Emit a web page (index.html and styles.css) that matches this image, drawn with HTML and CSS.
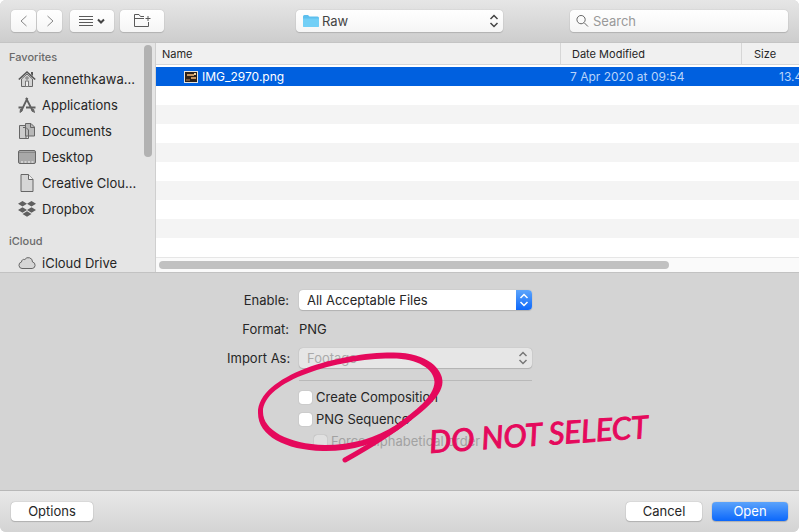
FILE: index.html
```html
<!DOCTYPE html>
<html lang="en">
<head>
    <meta charset="UTF-8">
    <meta name="viewport" content="width=device-width, initial-scale=1.0">
    <title>Import File</title>
    <link rel="stylesheet" href="styles.css">
</head>
<body>
    <div class="dialog">
        <header class="toolbar">
            <div class="tools">
                <div class="nav">
                    <button class="tool" aria-label="Back">
                        <svg width="10" height="14" viewBox="0 0 10 14"><path d="M7.500 2L2 7l5.500 5" class="thin"/></svg>
                    </button>
                    <button class="tool" aria-label="Forward">
                        <svg width="10" height="14" viewBox="0 0 10 14"><path d="M2.500 2L8 7l-5.500 5" class="thin"/></svg>
                    </button>
                </div>
                <button class="tool wide" aria-label="View">
                    <svg width="28" height="14" viewBox="0 0 28 14"><path d="M1 2.500h14M1 5.500h14M1 8.500h14M1 11.500h14" class="line"/><path d="M20 5.500l3 3 3-3" class="bold"/></svg>
                </button>
                <button class="tool wide" aria-label="New Folder">
                    <svg width="18" height="14" viewBox="0 0 18 14"><path d="M11 2.500H7.500L6 .5H1.500v12h14V8M1.500 4.500H11M15 2v5M12.500 4.500h5" class="line"/></svg>
                </button>
            </div>
            <div class="location">
                <svg class="folder" width="16" height="14" viewBox="0 0 16 14"><path d="M0 2.500Q0 1 1.500 1h3.500l1.500 1.500h8q1.500 0 1.500 1.500v7.500q0 1.500-1.500 1.500h-13Q0 13 0 11.500z" fill="#5dbfee"/><path d="M0 4.500h16v7q0 1.500-1.500 1.500h-13Q0 13 0 11.500z" fill="#72cff6"/></svg>
                <select aria-label="Location"><option>Raw</option></select>
                <svg class="arrows" width="10" height="14" viewBox="0 0 10 14"><path d="M1.500 5L5 1.500 8.500 5M1.500 9L5 12.500 8.500 9"/></svg>
            </div>
            <div class="search">
                <svg width="14" height="14" viewBox="0 0 14 14"><circle cx="5.500" cy="5.500" r="4.500" class="line"/><path d="M9 9l4 4" class="line"/></svg>
                <input type="text" placeholder="Search" aria-label="Search">
            </div>
        </header>

        <div class="browser">
            <nav class="sidebar">
                <h2>Favorites</h2>
                <ul>
                    <li><a href="#"><svg width="18" height="18" viewBox="0 0 18 18"><path d="M3.500 9v7.500h11V9L9 4z" fill="#d4d4d4" stroke="#666"/><path d="M.8 9.500L9 2l8.200 7.500" fill="none" stroke="#555" stroke-width="1.600"/><path d="M13 2h2v4l-2-1.800z" fill="#555"/><path d="M8 7h2v2H8zM7.500 11h3v5.500h-3z" fill="#eee" stroke="#777"/></svg>kennethkawa...</a></li>
                    <li><a href="#"><svg width="18" height="18" viewBox="0 0 18 18"><path d="M9.500 2L3 15.500M8 2l7 13.500M.5 11.500h5M8 11.500h9.500" fill="none" stroke="#606060" stroke-width="1.800"/><path d="M2.500 13L2 16.500 4.500 14.500M15.500 13l1 3.500-3-2" fill="#666" stroke="#666"/></svg>Applications</a></li>
                    <li><a href="#"><svg width="18" height="18" viewBox="0 0 18 18"><path d="M1.500 3.500H8v13H1.500z" fill="#ccc" stroke="#666"/><path d="M7.500 1.500H13L16.500 5v9h-9z" fill="#b8b8b8" stroke="#666"/><path d="M12.500 1.500v4h4M5 5.500h3l2.500 2.500v8.500H5" fill="none" stroke="#666"/></svg>Documents</a></li>
                    <li><a href="#"><svg width="18" height="18" viewBox="0 0 18 18"><rect x=".5" y="2.500" width="17" height="13" rx="1.500" fill="#a8a8a8" stroke="#666"/><path d="M1 4.500h16" stroke="#888"/><path d="M3 14h2M6.500 14h2M10 14h2M13.500 14h2" stroke="#ddd" stroke-width="1.500"/></svg>Desktop</a></li>
                    <li><a href="#"><svg width="18" height="18" viewBox="0 0 18 18"><path d="M3 .5h7.500L15 5.500v12H3z" fill="#d6d6d6" stroke="#666"/><path d="M10.500.5v5H15" fill="#f2f2f2" stroke="#666"/></svg>Creative Clou...</a></li>
                    <li><a href="#"><svg width="18" height="18" viewBox="0 0 18 18"><path d="M4.500 1L9 3.800 4.500 6.600 0 3.800zM13.500 1L18 3.800l-4.500 2.800L9 3.800zM4.500 7.200L9 10l-4.500 2.800L0 10zM13.500 7.200L18 10l-4.500 2.800L9 10zM9 11.200l4.500 2.800L9 16.800 4.500 14z" fill="#5f5f5f"/></svg>Dropbox</a></li>
                </ul>
                <h2>iCloud</h2>
                <ul>
                    <li><a href="#"><svg width="18" height="18" viewBox="0 0 18 18"><path d="M4 14.500a3.300 3.300 0 0 1-.5-6.500 2.500 2.500 0 0 1 3.300-2.500 4.200 4.200 0 0 1 7.700 2.500 3.300 3.300 0 0 1-.3 6.500z" fill="#d6d6d6" stroke="#666"/></svg>iCloud Drive</a></li>
                </ul>
                <div class="thumb"></div>
            </nav>

            <main class="files">
                <table>
                    <thead>
                        <tr><th class="name">Name</th><th class="date">Date Modified</th><th class="size">Size</th></tr>
                    </thead>
                    <tbody>
                        <tr class="selected">
                            <td class="name"><svg width="14" height="12" viewBox="0 0 14 12"><path d="M0 0h14v12H0z" fill="#e8e4dc"/><path d="M1 1h12v10H1z" fill="#2c2119"/><path d="M3 3h7v2H3zM7 6h5v2H7z" fill="#c69560"/><path d="M2 8h4v2H2z" fill="#76563a"/><path d="M10 2h2v2h-2z" fill="#efd3a1"/></svg>IMG_2970.png</td>
                            <td class="date">7 Apr 2020 at 09:54</td>
                            <td class="size">13.4 MB</td>
                        </tr>
                        <tr><td colspan="3"></td></tr>
                        <tr><td colspan="3"></td></tr>
                        <tr><td colspan="3"></td></tr>
                        <tr><td colspan="3"></td></tr>
                        <tr><td colspan="3"></td></tr>
                        <tr><td colspan="3"></td></tr>
                        <tr><td colspan="3"></td></tr>
                        <tr><td colspan="3"></td></tr>
                        <tr><td colspan="3"></td></tr>
                    </tbody>
                </table>
                <div class="scrollbar"><div class="bar"></div></div>
            </main>
        </div>

        <section class="import">
            <form class="options">
                <label for="enable">Enable:</label>
                <div class="select">
                    <select id="enable"><option>All Acceptable Files</option></select>
                    <svg class="arrows blue" width="16" height="20" viewBox="-3 -3 16 20"><path d="M1.500 5L5 1.500 8.500 5M1.500 9L5 12.500 8.500 9"/></svg>
                </div>
                <span class="label">Format:</span>
                <span>PNG</span>
                <label for="importAs">Import As:</label>
                <div class="select">
                    <select id="importAs" disabled><option>Footage</option></select>
                    <svg class="arrows" width="10" height="14" viewBox="0 0 10 14"><path d="M1.500 5L5 1.500 8.500 5M1.500 9L5 12.500 8.500 9"/></svg>
                </div>
                <div class="checks">
                    <label><input type="checkbox">Create Composition</label>
                    <label><input type="checkbox">PNG Sequence</label>
                    <label class="sub"><input type="checkbox" disabled>Force alphabetical order</label>
                </div>

                <!-- hand-drawn note over the checkboxes -->
                <svg class="note" width="420" height="125" viewBox="250 345 420 125">
                    <path class="ring" d="M392 352.500C428 352 443 370 442.500 382C442 398 420 414 398 430C378 444 350 451.500 323 451C285 450 258 436 258 413C258 375 340 352.500 392 352.500ZM392 358.500C340 358 263 380 263 412C263 430 288 444 325 445C352 445 376 438 396 425C415 411 434 397 434.500 382C434 369 418 358.500 392 358.500Z"/>
                    <path class="tail" d="M410 418C391 433 370 446 345 460"/>
                    <text x="430" y="453" transform="rotate(-4 430 453)">DO NOT SELECT</text>
                </svg>
            </form>
        </section>

        <footer class="actions">
            <button class="button options-button">Options</button>
            <button class="button">Cancel</button>
            <button class="button primary">Open</button>
        </footer>
    </div>
</body>
</html>
```
FILE: styles.css
```css
* {
    box-sizing: border-box;
}

body {
    margin: 0;
    background-color: #fff;
    color: #262626;
    font-family: Inter, "Liberation Sans", sans-serif;
    font-size: 13px;
    line-height: 20px;
}

button, input, select {
    font: inherit;
    color: inherit;
}

.dialog {
    display: flex;
    flex-direction: column;
    min-height: 100vh;
    overflow: hidden;
    background-color: #d4d4d4;
    border-radius: 6px;
}

/* toolbar */
.toolbar {
    display: grid;
    grid-template-columns: 1fr 207px 1fr;
    align-items: center;
    height: 43px;
    padding: 0 11px;
    background: linear-gradient(#e6e6e6, #cdcdcd);
    border-bottom: 1px solid #c4c4c4;
}

.tools {
    display: flex;
    gap: 6px;
}

.nav {
    display: flex;
    gap: 1px;
    margin-right: 2px;
}

.tool {
    display: flex;
    align-items: center;
    justify-content: center;
    width: 25px;
    height: 22px;
    padding: 0;
    border: 0;
    border-radius: 4px;
    background: linear-gradient(#fff, #f5f5f5);
    box-shadow: 0 0 1px #999, 0 1px 1px #b4b4b4;
}

.tool.wide {
    width: 44px;
}

.thin, .line, .bold {
    fill: none;
    stroke: #5a5a5a;
}

.thin {
    stroke: #888;
}

.bold {
    stroke: #444;
    stroke-width: 2;
}

.location, .search {
    position: relative;
    height: 22px;
    border-radius: 4px;
    background: linear-gradient(#fff, #f5f5f5);
    box-shadow: 0 0 1px #999, 0 1px 1px #b4b4b4;
}

.location {
    color: #444;
}

.folder {
    position: absolute;
    left: 7px;
    top: 4px;
}

.location select {
    padding-left: 26px;
}

.search {
    display: flex;
    align-items: center;
    gap: 4px;
    justify-self: end;
    width: 218px;
    max-width: 90%;
    padding-left: 6px;
}

.search input {
    width: 100%;
    padding: 0;
    border: 0;
    background: none;
    outline: none;
}

.search input::placeholder {
    color: #999;
    opacity: 1;
}

select {
    appearance: none;
    display: block;
    width: 100%;
    height: 100%;
    padding: 0 8px;
    border: 0;
    border-radius: 4px;
    background: none;
}

.arrows {
    position: absolute;
    top: 4px;
    right: 4px;
    fill: none;
    stroke: #444;
    stroke-width: 1.5;
}

/* file browser */
.browser {
    display: flex;
    border-bottom: 1px solid #c2c2c2;
}

.sidebar {
    contain: size;
    position: relative;
    flex: 0 0 156px;
    padding-top: 5px;
    overflow: hidden;
    background-color: #e5e5e5;
    border-right: 1px solid #cfcfcf;
}

.sidebar h2 {
    margin: 0;
    padding-left: 9px;
    color: #6a6a6a;
    font-size: 11px;
    font-weight: 500;
    line-height: 18px;
}

.sidebar ul {
    margin: 0 0 10px;
    padding: 0;
    list-style: none;
}

.sidebar a {
    display: flex;
    align-items: center;
    gap: 6px;
    height: 26px;
    padding-left: 18px;
    color: #262626;
    text-decoration: none;
    white-space: nowrap;
}

.thumb {
    position: absolute;
    top: 2px;
    right: 3px;
    width: 8px;
    height: 112px;
    border-radius: 4px;
    background-color: #b2b2b2;
}

.files {
    flex: 1;
    min-width: 0;
    overflow: hidden;
    background-color: #fff;
}

table {
    width: 125%;
    min-width: 680px;
    table-layout: fixed;
    border-collapse: separate;
    border-spacing: 0;
    white-space: nowrap;
}

th {
    height: 22px;
    padding: 0 0 0 11px;
    background-color: #f0f0f0;
    border-bottom: 1px solid #d6d6d6;
    font-size: 11px;
    font-weight: 400;
    line-height: 20px;
    text-align: left;
}

th.name {
    width: 404px;
    padding-left: 6px;
}

th.date {
    width: 181px;
    border-left: 1px solid #d6d6d6;
}

th.size {
    border-left: 1px solid #d6d6d6;
    padding-left: 12px;
}

thead::after {
    content: "";
    display: table-row;
    height: 2px;
}

td {
    height: 19px;
    padding: 0;
    font-size: 12px;
    line-height: 19px;
}

tbody tr:nth-child(odd) {
    background-color: #f4f4f4;
}

tbody tr.selected {
    background-color: #0060df;
    color: #b8d4fa;
}

td.name {
    padding-left: 28px;
    color: #fff;
}

td.name svg {
    margin-right: 4px;
    vertical-align: -2px;
}

td.date {
    padding-left: 10px;
}

td.size {
    padding-left: 38px;
}

.scrollbar {
    height: 15px;
    padding: 3px;
    background-color: #fafafa;
    border-top: 1px solid #e6e6e6;
}

.bar {
    width: 80%;
    height: 8px;
    border-radius: 4px;
    background-color: #c1c1c1;
}

/* import options */
.import {
    display: flex;
    justify-content: center;
    flex: 1;
    padding: 17px 40px 17px 0;
}

.options {
    position: relative;
    display: grid;
    grid-template-columns: 62px 233px;
    grid-auto-rows: min-content;
    gap: 9px 10px;
}

.options > label, .label {
    text-align: right;
    white-space: nowrap;
}

.select {
    position: relative;
    height: 20px;
    border-radius: 4px;
    background-color: #fff;
    box-shadow: 0 0 1px #999, 0 1px 1px #b4b4b4;
}

.select:has(:disabled) {
    background-color: #e6e6e6;
}

.select select:disabled {
    color: #aaa;
    opacity: 1;
}

.select .arrows {
    top: 3px;
    stroke: #777;
}

.select .blue {
    top: 0;
    right: 0;
    border-radius: 0 4px 4px 0;
    background: linear-gradient(#5da5fb, #0d68fb);
    stroke: #fff;
}

.checks {
    grid-column: 2;
    display: flex;
    flex-direction: column;
    gap: 2px;
    margin-top: 3px;
    padding-top: 6px;
    border-top: 1px solid #b9b9b9;
}

.checks label {
    display: flex;
    align-items: center;
    gap: 4px;
}

.checks .sub {
    padding-left: 15px;
    color: #a2a2a2;
}

.checks input {
    appearance: none;
    width: 13px;
    height: 13px;
    margin: 0;
    border-radius: 3px;
    background-color: #fff;
    box-shadow: 0 0 1px #888;
}

.checks input:disabled {
    background-color: #e0e0e0;
}

.note {
    position: absolute;
    left: 23px;
    top: 55px;
    pointer-events: none;
}

.ring {
    fill: #e5095c;
    fill-rule: evenodd;
}

.tail {
    fill: none;
    stroke: #e5095c;
    stroke-width: 5;
    stroke-linecap: round;
}

.note text {
    fill: #e5095c;
    stroke: #e5095c;
    stroke-width: 1;
    font-family: Lato, "Liberation Sans", sans-serif;
    font-size: 31px;
    font-style: italic;
}

/* bottom bar */
.actions {
    display: flex;
    align-items: center;
    gap: 10px;
    height: 42px;
    padding: 0 11px;
    background: linear-gradient(#e8e8e8, #d4d4d4);
    border-top: 1px solid #b8b8b8;
}

.button {
    width: 76px;
    height: 19px;
    padding: 0;
    border: 0;
    border-radius: 4px;
    background-color: #fff;
    box-shadow: 0 0 1px #888, 0 1px 1px #b4b4b4;
    line-height: 19px;
}

.options-button {
    width: 82px;
    margin-right: auto;
}

.primary {
    background: linear-gradient(#5ba3fb, #0b67fb);
    color: #fff;
}
```
